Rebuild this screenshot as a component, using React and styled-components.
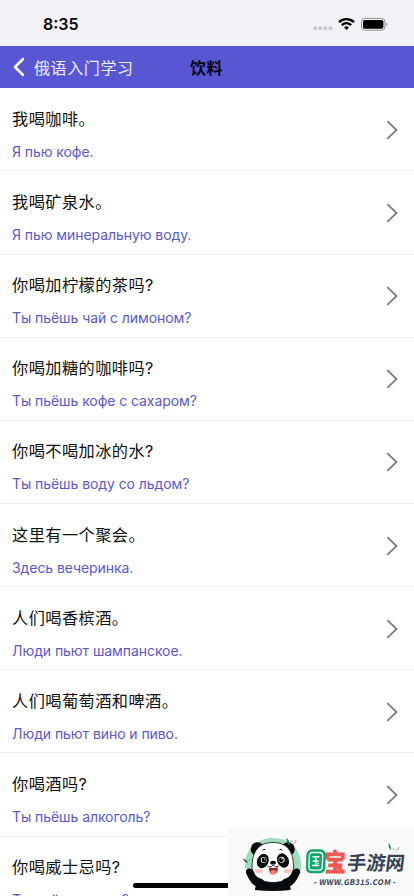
import React from "react";
import styled, { createGlobalStyle } from "styled-components";

const GlobalStyle = createGlobalStyle`
  * { box-sizing: border-box; }
  html, body { margin: 0; padding: 0; background: #fff; overflow: hidden; }
`;

const Screen = styled.main`
  position: relative;
  display: flex;
  flex-direction: column;
  width: 414px;
  height: 896px;
  overflow: hidden;
  background: #fff;
  color: #111;
  font-family: Inter, "Noto Sans CJK SC", sans-serif;
`;

const StatusBar = styled.header`
  flex: none;
  display: flex;
  align-items: center;
  justify-content: space-between;
  height: 46px;
  padding: 2px 26px 0 43px;
  background: #f2f1f6;
`;

const Clock = styled.time`
  font-size: 16px;
  font-weight: 600;
  line-height: 20px;
  color: #080808;
`;

const StatusIcons = styled.svg`
  display: block;
  width: 76px;
  height: 16px;
`;

const NavBar = styled.nav`
  flex: none;
  display: grid;
  grid-template-columns: 190px auto 1fr;
  align-items: center;
  height: 42.3px;
  background: #5856d3;
`;

const BackButton = styled.button`
  display: flex;
  align-items: center;
  gap: 9px;
  height: 42px;
  padding: 0 0 0 13px;
  border: 0;
  background: none;
  color: #efefff;
  font: 400 16px/24px "Noto Sans CJK SC", sans-serif;
  letter-spacing: 0.6px;
`;

const BackIcon = styled.svg`
  width: 12px;
  height: 20px;
`;

const Title = styled.h1`
  margin: 0;
  color: #05050f;
  font: 700 16px/24px "Noto Sans CJK SC", sans-serif;
  letter-spacing: 0.4px;
`;

const PhraseList = styled.ul`
  flex: 1;
  min-height: 0;
  margin: 0;
  padding: 0;
  list-style: none;
  overflow: hidden;
`;

const Row = styled.li`
  display: flex;
  align-items: flex-start;
  justify-content: space-between;
  height: 83.15px;
  padding: 0 15px 0 12px;
  border-bottom: 1px solid #f2f2f4;
`;

const Phrase = styled.div`
  display: flex;
  flex-direction: column;
  gap: 10px;
  padding-top: 18.6px;
`;

const Chinese = styled.span`
  font: 400 16.2px/24px Inter, "Noto Sans CJK SC", sans-serif;
  letter-spacing: 0.45px;
  white-space: nowrap;
`;

const Russian = styled.span`
  color: #5c58cb;
  font-size: 14px;
  line-height: 22px;
  letter-spacing: -0.07px;
  white-space: nowrap;
`;

const Chevron = styled.svg`
  width: 14px;
  height: 20px;
  margin-top: 31.6px;
`;

const HomeIndicator = styled.div`
  position: absolute;
  left: 133px;
  bottom: 8px;
  width: 148px;
  height: 5px;
  border-radius: 3px;
  background: #000;
`;

const Badge = styled.aside`
  position: absolute;
  right: 0;
  bottom: 0;
  width: 186px;
  height: 68px;
  background: #fafafb;
`;

const BadgeArt = styled.svg`
  display: block;
  width: 186px;
  height: 68px;
`;

const LogoText = styled.text`
  font-family: "Noto Sans CJK SC", sans-serif;
  font-weight: ${(p) => p.$weight || 900};
  font-size: ${(p) => p.$size}px;
  fill: ${(p) => p.$color};
`;

const phrases = [
  ["我喝咖啡。", "Я пью кофе."],
  ["我喝矿泉水。", "Я пью минеральную воду."],
  ["你喝加柠檬的茶吗?", "Ты пьёшь чай с лимоном?"],
  ["你喝加糖的咖啡吗?", "Ты пьёшь кофе с сахаром?"],
  ["你喝不喝加冰的水?", "Ты пьёшь воду со льдом?"],
  ["这里有一个聚会。", "Здесь вечеринка."],
  ["人们喝香槟酒。", "Люди пьют шампанское."],
  ["人们喝葡萄酒和啤酒。", "Люди пьют вино и пиво."],
  ["你喝酒吗?", "Ты пьёшь алкоголь?"],
  ["你喝威士忌吗?", "Ты пьёшь виски?"],
];

function Status() {
  return (
    <StatusIcons viewBox="0 0 76 16">
      <g fill="#c5c5ca">
        <rect x="1.4" y="10.4" width="3.6" height="3.6" rx="1" />
        <rect x="6.5" y="10.4" width="3.6" height="3.6" rx="1" />
        <rect x="11.6" y="10.4" width="3.6" height="3.6" rx="1" />
        <rect x="16.7" y="10.4" width="3.6" height="3.6" rx="1" />
      </g>
      <g fill="none" stroke="#000" strokeWidth="2.3">
        <path d="M27 6.1a11 11 0 0 1 15 0" />
        <path d="M29.8 9.1a6.8 6.8 0 0 1 9.4 0" />
      </g>
      <path d="M32 11.3a3.7 3.7 0 0 1 5 0L34.5 14z" />
      <rect x="49.5" y="2.4" width="23.4" height="11.8" rx="3.2" fill="#f2f1f6" stroke="#929296" />
      <rect x="51" y="3.9" width="20.4" height="8.8" rx="1.7" />
      <path d="M74.2 6.5c1.7.6 1.7 3 0 3.6z" fill="#919195" />
    </StatusIcons>
  );
}

function Panda() {
  return (
    <g>
      <path d="M18 46C13 27 25 10 45 10s32 17 27 36L61 56H28z" fill="#a2dcbb" />
      <path d="M18.5 40q-2 4 0 9M23 20q6-9 14-10" fill="none" stroke="#fafafb" strokeWidth="1.5" />
      <path d="M27 62q0-5 5-10h26q5 5 4.500 10-8 1-17.500 1t-18-1z" fill="#080c0e" />
      <circle cx="29.500" cy="21" r="6.800" fill="#080c0e" />
      <circle cx="60" cy="21" r="6.800" fill="#080c0e" />
      <path d="M24 39c0-16 7-24.500 21-24.500S65.500 23 65.500 39c0 10-9.500 15.500-20.500 15.500S24 49 24 39z" fill="#fff" stroke="#0b1012" strokeWidth=".8" />
      <ellipse cx="34.8" cy="33" rx="5.7" ry="7.4" transform="rotate(25 34.8 33)" fill="#080c0e" />
      <ellipse cx="55" cy="32.5" rx="5.7" ry="7.4" transform="rotate(-25 55 32.5)" fill="#080c0e" />
      <circle cx="35.7" cy="32" r="3" fill="#fff" />
      <circle cx="53.6" cy="31.7" r="3" fill="#fff" />
      <circle cx="36" cy="32" r="2.4" fill="#080c0e" />
      <circle cx="53.3" cy="31.8" r="2.4" fill="#080c0e" />
      <circle cx="36.7" cy="31.1" r=".7" fill="#fff" />
      <circle cx="54" cy="30.8" r=".7" fill="#fff" />
      <path d="M34.3 22.5q1.2-1.5 3-1M51.5 21.5q2-.4 3.1 1" fill="none" stroke="#111" />
      <ellipse cx="45" cy="34.7" rx="2.9" ry="1.9" fill="#080c0e" />
      <path d="M39.5 38q4 2 5.5-1 2 3 6 1" fill="none" stroke="#111" strokeWidth=".8" />
      <path d="M41 39.5q4 1 8.8-.2c.3 4.3-1.5 7.1-4.4 7.1S41 43.5 41 39.5z" fill="#8b292b" />
      <ellipse cx="45.6" cy="43.9" rx="2.9" ry="2" fill="#ff7b67" />
      <ellipse cx="31" cy="43" rx="3.9" ry="2.3" fill="#ffc4b9" />
      <ellipse cx="59.5" cy="43" rx="3.9" ry="2.3" fill="#ffc4b9" />
      <path d="M18.5 46c-3-6 5-8 7.500-2 1 4 4 6 8 7 4 2 0 7-4 8-5-1-9-7-11.500-13z" fill="#080c0e" />
      <path d="M71.500 46c3-6-5-8-7.500-2-1 4-4 6-8 7-4 2 0 7 4 8 5-1 9-7 11.500-13z" fill="#080c0e" />
    </g>
  );
}

function LogoBadge() {
  return (
    <Badge>
      <BadgeArt viewBox="0 0 186 68">
        <Panda />
        <g fill="#24795a">
          <path d="M58 10q4 2 4 7-3-1-4-7zM15 31q4 0 5 4-3 0-5-4zM160.500 15q3 2 2.500 7-3-2-2.500-7z" />
        </g>
        <path d="M62 14l3-1M66 15q2 0 2-3M21 33l1-2M168 22q3 0 3-3M165 20l1 2" fill="none" stroke="#789d8d" strokeWidth=".8" />
        <g transform="translate(78 21.3) skewX(-2)">
          <rect x="0.500" y="0" width="19.500" height="24" rx="5.500" fill="#12a66a" />
          <rect x="3.600" y="3.200" width="13.300" height="17.600" rx="3" fill="none" stroke="#fff" strokeWidth="1.300" />
          <path d="M6.700 7.500h7M7.200 11.700h6M6.700 16.300h7M10.200 7.500v8.800M12.200 13.600l1 .8" fill="none" stroke="#fff" strokeWidth="1.500" />
        </g>
        <g transform="translate(96.800 42.700) scale(1 1.140)">
          <LogoText x="0" y="0" $size={21} $weight={700} $color="#ef5753" stroke="#ef5753" strokeWidth="1" strokeLinejoin="round">宝</LogoText>
        </g>
        <g transform="translate(118.500 42.400) skewX(-7)">
          <LogoText x="0" y="0" $size={19.3} $weight={700} $color="#384454" textLength="57.500" lengthAdjust="spacingAndGlyphs">手游网</LogoText>
        </g>
        <g transform="translate(85.500 56.500) skewX(-9)">
          <LogoText x="0" y="0" $size={7.8} $weight={700} $color="#384454" textLength="82" lengthAdjust="spacing">- WWW.GB315.COM -</LogoText>
        </g>
      </BadgeArt>
    </Badge>
  );
}

export default function App() {
  return (
    <Screen>
      <GlobalStyle />
      <StatusBar>
        <Clock>8:35</Clock>
        <Status />
      </StatusBar>
      <NavBar>
        <BackButton>
          <BackIcon viewBox="0 0 12 20" fill="none" stroke="#fff" strokeWidth="2.5" strokeLinecap="round" strokeLinejoin="round">
            <path d="M10 2L2 10l8 8" />
          </BackIcon>
          俄语入门学习
        </BackButton>
        <Title>饮料</Title>
      </NavBar>
      <PhraseList>
        {phrases.map(([chinese, russian]) => (
          <Row key={chinese}>
            <Phrase>
              <Chinese lang="zh-CN">{chinese}</Chinese>
              <Russian lang="ru">{russian}</Russian>
            </Phrase>
            <Chevron viewBox="0 0 14 20" fill="none" stroke="#7c7c80" strokeWidth="1.8">
              <path d="M2.300 1.200L11.500 10l-9.200 8.800" />
            </Chevron>
          </Row>
        ))}
      </PhraseList>
      <HomeIndicator />
      <LogoBadge />
    </Screen>
  );
}
